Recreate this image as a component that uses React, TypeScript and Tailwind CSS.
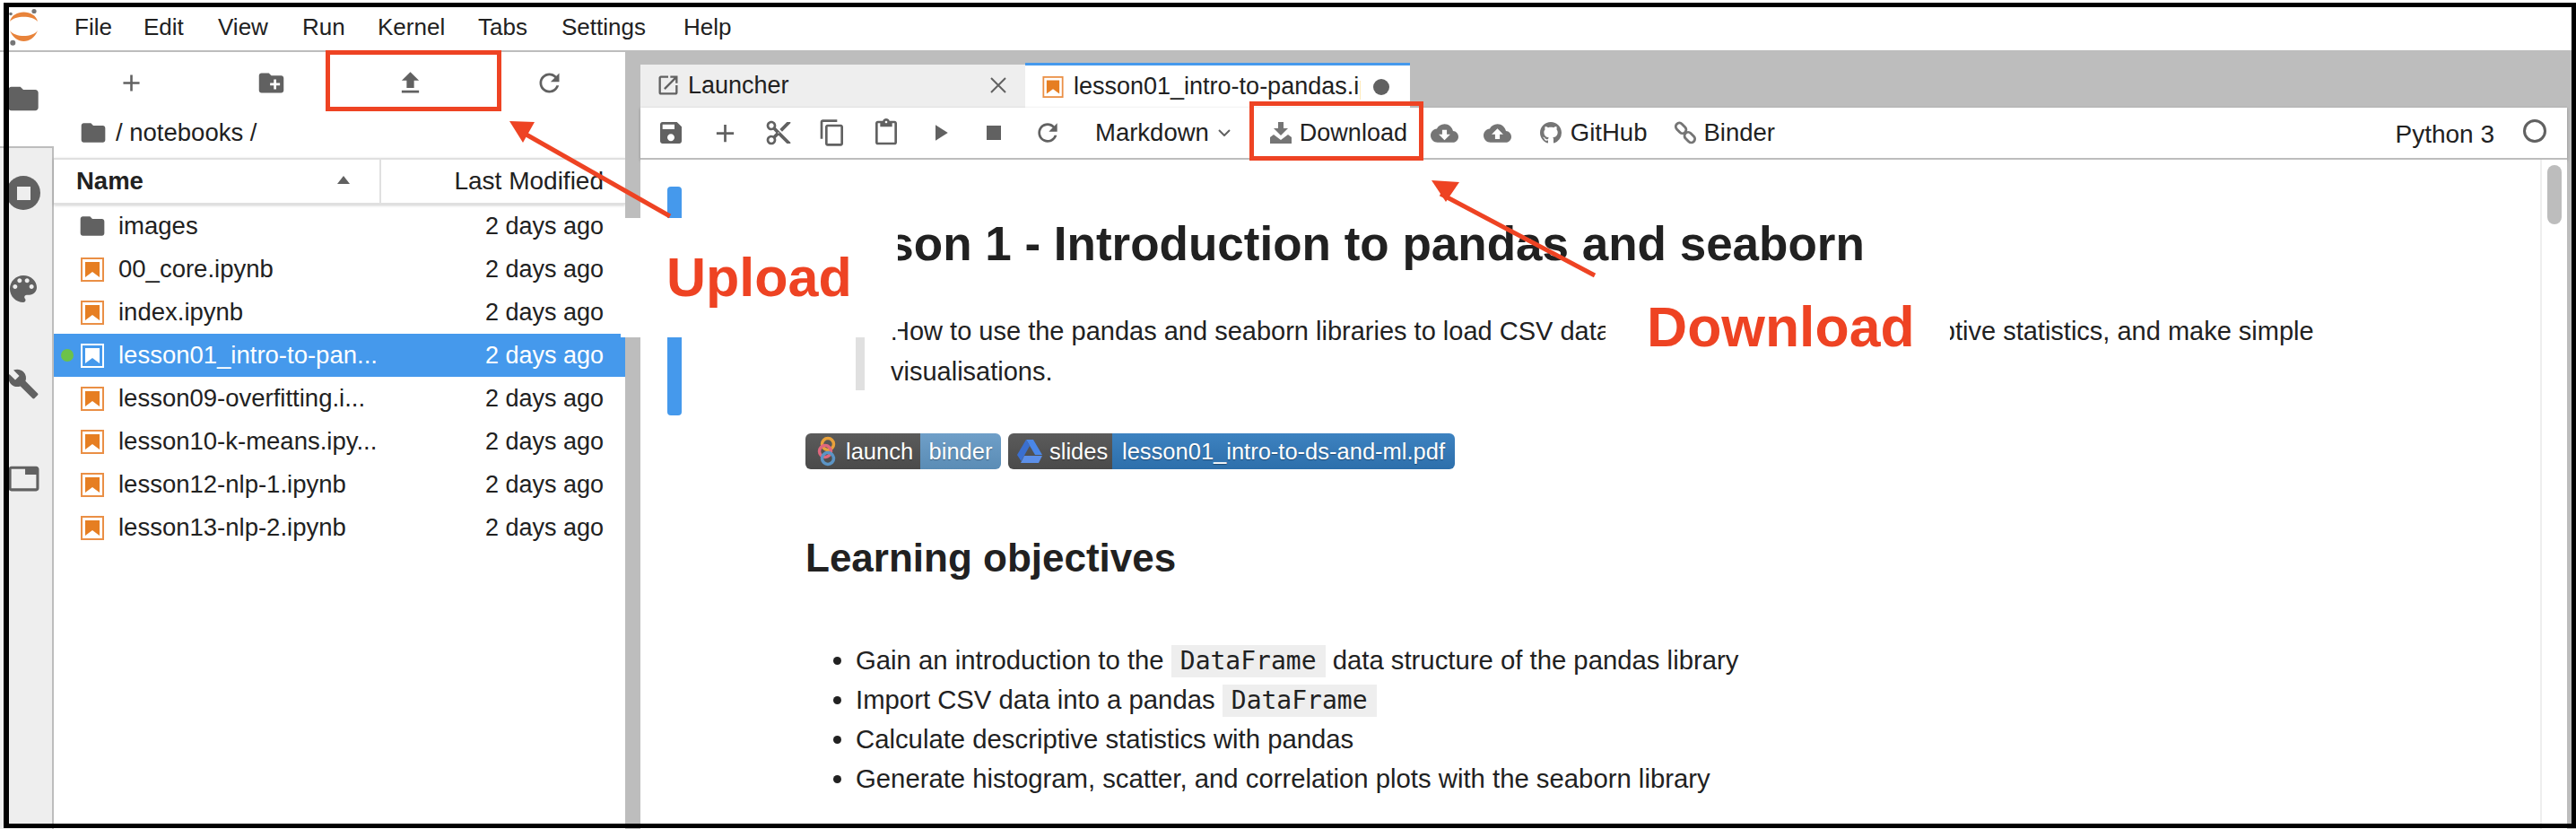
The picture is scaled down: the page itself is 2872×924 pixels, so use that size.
import type { ReactNode } from "react"

const fileRows = [
  { name: "images", kind: "folder" },
  { name: "00_core.ipynb", kind: "nb" },
  { name: "index.ipynb", kind: "nb" },
  { name: "lesson01_intro-to-pan...", kind: "nb", active: true },
  { name: "lesson09-overfitting.i...", kind: "nb" },
  { name: "lesson10-k-means.ipy...", kind: "nb" },
  { name: "lesson12-nlp-1.ipynb", kind: "nb" },
  { name: "lesson13-nlp-2.ipynb", kind: "nb" },
]

const P = {
  add: "M19 13h-6v6h-2v-6H5v-2h6V5h2v6h6v2z",
  newFolder:
    "M20 6h-8l-2-2H4c-1.11 0-1.99.89-1.99 2L2 18c0 1.11.89 2 2 2h16c1.11 0 2-.89 2-2V8c0-1.11-.89-2-2-2zm-1 8h-3v3h-2v-3h-3v-2h3V9h2v3h3v2z",
  upload: "M9 16h6v-6h4l-7-7-7 7h4zm-4 2h14v2H5z",
  refresh:
    "M17.65 6.35C16.2 4.9 14.21 4 12 4c-4.42 0-7.99 3.58-7.99 8s3.57 8 7.99 8c3.73 0 6.84-2.55 7.73-6h-2.08c-.82 2.33-3.04 4-5.65 4-3.31 0-6-2.69-6-6s2.69-6 6-6c1.66 0 3.14.69 4.22 1.78L13 11h7V4l-2.35 2.35z",
  folder: "M10 4H4c-1.1 0-1.99.9-1.99 2L2 18c0 1.1.9 2 2 2h16c1.1 0 2-.9 2-2V8c0-1.1-.9-2-2-2h-8l-2-2z",
  save: "M17 3H5c-1.11 0-2 .9-2 2v14c0 1.1.89 2 2 2h14c1.1 0 2-.9 2-2V7l-4-4zm-5 16c-1.66 0-3-1.34-3-3s1.34-3 3-3 3 1.34 3 3-1.34 3-3 3zm3-10H5V5h10v4z",
  cut: "M9.64 7.64c.23-.5.36-1.05.36-1.64 0-2.21-1.79-4-4-4S2 3.79 2 6s1.79 4 4 4c.59 0 1.14-.13 1.64-.36L10 12l-2.36 2.36C7.14 14.13 6.59 14 6 14c-2.21 0-4 1.79-4 4s1.79 4 4 4 4-1.79 4-4c0-.59-.13-1.14-.36-1.64L12 14l7 7h3v-1L9.64 7.64zM6 8c-1.1 0-2-.89-2-2s.9-2 2-2 2 .89 2 2-.9 2-2 2zm0 12c-1.1 0-2-.89-2-2s.9-2 2-2 2 .89 2 2-.9 2-2 2zm6-7.5c-.28 0-.5-.22-.5-.5s.22-.5.5-.5.5.22.5.5-.22.5-.5.5zM19 3l-6 6 2 2 7-7V3z",
  copy: "M16 1H4c-1.1 0-2 .9-2 2v14h2V3h12V1zm3 4H8c-1.1 0-2 .9-2 2v14c0 1.1.9 2 2 2h11c1.1 0 2-.9 2-2V7c0-1.1-.9-2-2-2zm0 16H8V7h11v14z",
  paste:
    "M19 2h-4.18C14.4.84 13.3 0 12 0c-1.3 0-2.4.84-2.82 2H5c-1.1 0-2 .9-2 2v16c0 1.1.9 2 2 2h14c1.1 0 2-.9 2-2V4c0-1.1-.9-2-2-2zm-7 0c.55 0 1 .45 1 1s-.45 1-1 1-1-.45-1-1 .45-1 1-1zm7 18H5V4h2v3h10V4h2v16z",
  run: "M8 5v14l11-7z",
  stop: "M6 6h12v12H6z",
  cloudDown:
    "M19.35 10.04C18.67 6.59 15.64 4 12 4 9.11 4 6.6 5.64 5.35 8.04 2.34 8.36 0 10.91 0 14c0 3.31 2.69 6 6 6h13c2.76 0 5-2.24 5-5 0-2.64-2.05-4.78-4.65-4.96zM17 13l-5 5-5-5h3V9h4v4h3z",
  cloudUp:
    "M19.35 10.04C18.67 6.59 15.64 4 12 4 9.11 4 6.6 5.64 5.35 8.04 2.34 8.36 0 10.91 0 14c0 3.31 2.69 6 6 6h13c2.76 0 5-2.24 5-5 0-2.64-2.05-4.78-4.65-4.96zM14 13v4h-4v-4H7l5-5 5 5h-3z",
  palette:
    "M12 3c-4.97 0-9 4.03-9 9s4.03 9 9 9c.83 0 1.5-.67 1.5-1.5 0-.39-.15-.74-.39-1.01-.23-.26-.38-.61-.38-.99 0-.83.67-1.5 1.5-1.5H16c2.76 0 5-2.24 5-5 0-4.42-4.03-8-9-8zm-5.5 9c-.83 0-1.5-.67-1.5-1.5S5.67 9 6.5 9 8 9.67 8 10.5 7.33 12 6.5 12zm3-4C8.67 8 8 7.33 8 6.5S8.67 5 9.5 5s1.5.67 1.5 1.5S10.33 8 9.5 8zm5 0c-.83 0-1.5-.67-1.5-1.5S13.67 5 14.5 5s1.5.67 1.5 1.5S15.33 8 14.5 8zm3 4c-.83 0-1.5-.67-1.5-1.5S16.67 9 17.5 9s1.5.67 1.5 1.5-.67 1.5-1.5 1.5z",
  wrench:
    "M22.7 19l-9.1-9.1c.9-2.3.4-5-1.5-6.9-2-2-5-2.4-7.4-1.3L9 6 6 9 1.6 4.7C.4 7.1.9 10.1 2.9 12.1c1.9 1.9 4.6 2.4 6.9 1.5l9.1 9.1c.4.4 1 .4 1.4 0l2.3-2.3c.5-.4.5-1.1.1-1.4z",
  tab: "M21 3H3c-1.1 0-2 .9-2 2v14c0 1.1.9 2 2 2h18c1.1 0 2-.9 2-2V5c0-1.1-.9-2-2-2zm0 16H3V5h10v4h8v10z",
  launch:
    "M19 19H5V5h7V3H5c-1.11 0-2 .9-2 2v14c0 1.1.89 2 2 2h14c1.1 0 2-.9 2-2v-7h-2v7zM14 3v2h3.59l-9.83 9.83 1.41 1.41L19 6.41V10h2V3h-7z",
}

const Icon = ({ d, className }: { d: string; className: string }) => (
  <svg viewBox="0 0 24 24" className={`shrink-0 ${className.includes("fill-") ? "" : "fill-[#616161]"} ${className}`}>
    <path d={d} />
  </svg>
)

const NotebookIcon = ({ white, className }: { white?: boolean; className: string }) => (
  <svg viewBox="0 0 26 27" className={`shrink-0 ${className}`}>
    <rect x="1" y="1" width="24" height="25" fill="none" stroke={white ? "#ffffff" : "#ea8f45"} strokeWidth="2" />
    <path d="M5 5h16v17l-8-6-8 6z" fill={white ? "#ffffff" : "#e67e22"} />
  </svg>
)

const ToolButton = ({ children, w }: { children: ReactNode; w: string }) => (
  <div className={`flex items-center justify-center ${w}`}>{children}</div>
)

const Row = ({ name, kind, active }: { name: string; kind: string; active?: boolean }) => (
  <div className={`relative flex h-[48px] items-center pl-[30px] pr-[24px] ${active ? "bg-[#4599ec] text-white" : "text-[#212121]"}`}>
    {active && <span className="absolute left-[8px] top-[17px] h-[14px] w-[14px] rounded-full bg-[#6cc24a]" />}
    {kind === "folder" ? <Icon d={P.folder} className="h-[32px] w-[32px] -ml-[3px] -mr-[3px]" /> : <NotebookIcon white={active} className="h-[27px] w-[26px]" />}
    <span className="ml-[16px] flex-1">{name}</span>
    <span className="text-[27px]">2 days ago</span>
  </div>
)

const Code = ({ children }: { children: string }) => (
  <code className="inline-block h-[36px] bg-[#eeeeee] px-[10px] font-['DejaVu_Sans_Mono',monospace] text-[28px] leading-[36px] text-[#212121]">
    {children}
  </code>
)

export default function App() {
  return (
    <div className="relative flex h-[924px] w-[2872px] flex-col overflow-hidden bg-white font-['Liberation_Sans',sans-serif] text-[27.5px] text-[#212121]">
      {/* menu bar */}
      <div className="flex h-[58px] shrink-0 items-center border-b-2 border-[#bdbdbd] pt-[4px] text-[26px]">
        <svg viewBox="0 0 50 57" className="h-[57px] w-[50px] shrink-0 -mt-[4px]">
          <path d="M11 24C14 10 39 10 42 24 36 17 17 17 11 24Z" fill="#e8833a" />
          <path d="M11 34C17 50 36 50 42 34 36 42 17 42 11 34Z" fill="#e8833a" />
          <circle cx="38" cy="12.5" r="2.6" fill="#767677" />
          <circle cx="12" cy="15.5" r="1.8" fill="#767677" />
          <circle cx="14.3" cy="47.7" r="3" fill="#767677" />
        </svg>
        <div className="ml-[33px] flex">
          <span className="w-[77px]">File</span>
          <span className="w-[83px]">Edit</span>
          <span className="w-[94px]">View</span>
          <span className="w-[84px]">Run</span>
          <span className="w-[112px]">Kernel</span>
          <span className="w-[93px]">Tabs</span>
          <span className="w-[136px]">Settings</span>
          <span>Help</span>
        </div>
      </div>

      <div className="flex min-h-0 flex-1">
        {/* activity bar */}
        <div className="flex w-[60px] shrink-0 flex-col">
          <div className="flex h-[105px] shrink-0 items-start justify-center bg-white pr-[8px] pt-[32px]">
            <Icon d={P.folder} className="h-[40px] w-[40px]" />
          </div>
          <div className="flex flex-1 flex-col items-center border-r-2 border-t-2 border-[#bdbdbd] bg-[#eeeeee] pr-[6px]">
            <div className="mt-[31px] flex h-[38px] w-[38px] items-center justify-center rounded-full bg-[#616161]">
              <span className="h-[15px] w-[15px] bg-[#eeeeee]" />
            </div>
            <Icon d={P.palette} className="mt-[68px] h-[40px] w-[40px]" />
            <Icon d={P.wrench} className="mt-[68px] h-[36px] w-[36px]" />
            <Icon d={P.tab} className="mt-[69px] h-[37px] w-[37px]" />
          </div>
        </div>

        {/* file browser */}
        <div className="flex w-[637px] shrink-0 flex-col">
          <div className="flex h-[62px] items-center pt-[6px]">
            <ToolButton w="w-[172px]"><Icon d={P.add} className="h-[31px] w-[31px]" /></ToolButton>
            <ToolButton w="w-[140px]"><Icon d={P.newFolder} className="h-[33px] w-[33px]" /></ToolButton>
            <ToolButton w="w-[170px]"><Icon d={P.upload} className="h-[33px] w-[33px]" /></ToolButton>
            <ToolButton w="w-[140px]"><Icon d={P.refresh} className="h-[33px] w-[33px]" /></ToolButton>
          </div>
          <div className="flex h-[56px] items-center pl-[28px]">
            <Icon d={P.folder} className="h-[32px] w-[32px]" />
            <span className="ml-[9px]">/ notebooks /</span>
          </div>
          <div className="flex h-[52px] items-center border-y-2 border-[#e0e0e0] shadow-[0_1px_3px_rgba(0,0,0,0.2)]">
            <div className="relative flex h-full w-[365px] items-center border-r-2 border-[#e0e0e0] pl-[25px] font-bold">
              Name
              <span className="absolute left-[316px] top-[18px] h-0 w-0 border-x-[7px] border-b-[9px] border-x-transparent border-b-[#616161]" />
            </div>
            <div className="flex-1 pr-[24px] text-right text-[28px]">Last Modified</div>
          </div>
          <div>
            {fileRows.map((r) => (
              <Row key={r.name} {...r} />
            ))}
          </div>
        </div>

        {/* splitter */}
        <div className="w-[17px] shrink-0 bg-[#bdbdbd]" />

        {/* main area */}
        <div className="flex min-w-0 flex-1 flex-col bg-[#bdbdbd] pr-[10px]">
          <div className="flex h-[62px] shrink-0 items-end pt-[12px] text-[27px]">
            <div className="flex h-[48px] w-[429px] items-center bg-[#eeeeee] pb-[2px] pl-[17px] pr-[20px]">
              <Icon d={P.launch} className="h-[28px] w-[28px]" />
              <span className="ml-[8px] flex-1 text-[#212121]">Launcher</span>
              <svg viewBox="0 0 20 20" className="h-[20px] w-[20px] stroke-[#616161] stroke-2">
                <path d="M2 2l16 16M18 2L2 18" />
              </svg>
            </div>
            <div className="ml-0 flex h-[50px] w-[429px] items-center overflow-hidden border-t-[3px] border-[#4599ec] bg-white pl-[19px] pr-[22px]">
              <NotebookIcon className="h-[24px] w-[24px]" />
              <span className="ml-[11px] w-[320px] overflow-hidden whitespace-nowrap">lesson01_intro-to-pandas.ipynb</span>
              <span className="ml-[14px] h-[18px] w-[18px] shrink-0 rounded-full bg-[#616161]" />
            </div>
          </div>

          {/* notebook toolbar */}
          <div className="flex h-[58px] shrink-0 items-center border-b-2 border-[#bdbdbd] bg-white pl-[4px] shadow-[0_1px_3px_rgba(0,0,0,0.25)]">
            <ToolButton w="w-[60px]"><Icon d={P.save} className="h-[32px] w-[32px]" /></ToolButton>
            <ToolButton w="w-[60px]"><Icon d={P.add} className="h-[33px] w-[33px]" /></ToolButton>
            <ToolButton w="w-[60px]"><Icon d={P.cut} className="h-[32px] w-[32px]" /></ToolButton>
            <ToolButton w="w-[60px]"><Icon d={P.copy} className="h-[32px] w-[32px]" /></ToolButton>
            <ToolButton w="w-[60px]"><Icon d={P.paste} className="h-[32px] w-[32px]" /></ToolButton>
            <ToolButton w="w-[60px]"><Icon d={P.run} className="h-[30px] w-[30px]" /></ToolButton>
            <ToolButton w="w-[60px]"><Icon d={P.stop} className="h-[32px] w-[32px]" /></ToolButton>
            <ToolButton w="w-[60px]"><Icon d={P.refresh} className="h-[32px] w-[32px]" /></ToolButton>
            <span className="ml-[23px]">Markdown</span>
            <svg viewBox="0 0 14 8" className="ml-[10px] h-[8px] w-[14px] shrink-0 fill-none stroke-[#616161] stroke-2">
              <path d="M1 1l6 6 6-6" />
            </svg>
            <svg viewBox="0 0 26 26" className="ml-[43px] h-[26px] w-[26px] shrink-0 fill-[#757575]">
              <path d="M10 1h6v7h5l-8 8-8-8h5z" />
              <path d="M1 18l4-3 8 6 8-6 4 3v7H1zM18 21h2v2h-2zM21 21h2v2h-2z" />
            </svg>
            <span className="ml-[8px] w-[117px] text-[27px]">Download</span>
            <Icon d={P.cloudDown} className="ml-[29px] h-[31px] w-[31px] fill-[#757575]" />
            <Icon d={P.cloudUp} className="ml-[28px] h-[31px] w-[31px] fill-[#757575]" />
            <svg viewBox="0 0 16 16" className="ml-[32px] h-[24px] w-[24px] shrink-0 fill-[#757575]">
              <path d="M8 0C3.58 0 0 3.58 0 8c0 3.54 2.29 6.53 5.47 7.59.4.07.55-.17.55-.38 0-.19-.01-.82-.01-1.49-2.01.37-2.53-.49-2.69-.94-.09-.23-.48-.94-.82-1.13-.28-.15-.68-.52-.01-.53.63-.01 1.08.58 1.23.82.72 1.21 1.87.87 2.33.66.07-.52.28-.87.51-1.07-1.78-.2-3.64-.89-3.64-3.95 0-.87.31-1.59.82-2.15-.08-.2-.36-1.02.08-2.12 0 0 .67-.21 2.2.82.64-.18 1.32-.27 2-.27.68 0 1.36.09 2 .27 1.53-1.04 2.2-.82 2.2-.82.44 1.1.16 1.92.08 2.12.51.56.82 1.27.82 2.15 0 3.07-1.87 3.75-3.65 3.95.29.25.54.73.54 1.48 0 1.07-.01 1.93-.01 2.2 0 .21.15.46.55.38A8.013 8.013 0 0016 8c0-4.42-3.58-8-8-8z" />
            </svg>
            <span className="ml-[10px]">GitHub</span>
            <svg viewBox="0 0 24 24" className="ml-[30px] h-[26px] w-[26px] shrink-0 fill-none stroke-[#757575] stroke-[2.6]">
              <rect x="1.5" y="3.5" width="12" height="7.5" rx="3.7" transform="rotate(45 7.5 7.2)" />
              <rect x="10.5" y="13" width="12" height="7.5" rx="3.7" transform="rotate(45 16.5 16.7)" />
            </svg>
            <span className="ml-[7px]">Binder</span>
            <span className="ml-auto mt-[4px] text-[28px]">Python 3</span>
            <span className="ml-[32px] mr-[23px] -mt-[4px] h-[26px] w-[26px] shrink-0 rounded-full border-[3px] border-[#616161]" />
          </div>

          {/* notebook content */}
          <div className="relative flex min-h-0 flex-1 bg-white">
            <div className="relative flex-1 pl-[184px] text-[29.3px]">
              <div className="absolute left-[30px] top-[30px] h-[255px] w-[16px] rounded-[4px] bg-[#4599ec]" />
              <h1 className="mt-[60px] text-[53px] font-bold leading-[68px] text-[#212121]">
                Lesson 1 - Introduction to pandas and seaborn
              </h1>
              <div className="relative mt-[41px] pl-[95px] text-[29px] leading-[45px]">
                <span className="absolute left-[56px] top-[28px] h-[60px] w-[10px] bg-[#e0e0e0]" />
                {/* the gap sits under the Download label, where the reference's line runs longer */}
                <p className="w-[1650px]">
                  How to use the pandas and seaborn libraries to load CSV data, calculate<span className="inline-block w-[152px]" /> descriptive statistics, and make simple visualisations.
                </p>
              </div>
              <div className="mt-[46px] flex gap-[8px] text-[25.5px] text-white [text-shadow:0_1px_1px_rgba(0,0,0,0.35)]">
                <div className="flex h-[40px] overflow-hidden rounded-[6px]">
                  <div className="flex w-[128px] items-center bg-gradient-to-b from-[#5b5b5b] to-[#4a4a4a] pl-[13px]">
                    <svg viewBox="0 0 22 34" className="h-[34px] w-[22px] shrink-0 fill-none stroke-[3.5]">
                      <circle cx="12" cy="9" r="6.5" stroke="#e8a13b" />
                      <circle cx="9" cy="17" r="6.5" stroke="#e0677d" />
                      <circle cx="12" cy="25" r="6.5" stroke="#5b94c5" />
                    </svg>
                    <span className="ml-[10px]">launch</span>
                  </div>
                  <div className="flex w-[90px] items-center justify-center bg-gradient-to-b from-[#6f9fc8] to-[#5a8cb5]">binder</div>
                </div>
                <div className="flex h-[40px] overflow-hidden rounded-[6px]">
                  <div className="flex w-[116px] items-center bg-gradient-to-b from-[#5b5b5b] to-[#4a4a4a] pl-[10px]">
                    <svg viewBox="0 0 28 26" className="h-[30px] w-[28px] shrink-0">
                      <path d="M10 0h8l10 17h-8z" fill="#4a87e8" />
                      <path d="M10 0l4 7-9.5 17L0 17z" fill="#3a6fd0" />
                      <path d="M8 18h20l-4 8H4z" fill="#5c8fe8" />
                    </svg>
                    <span className="ml-[8px]">slides</span>
                  </div>
                  <div className="flex w-[382px] items-center justify-center bg-gradient-to-b from-[#3d82c0] to-[#2d6fab]">lesson01_intro-to-ds-and-ml.pdf</div>
                </div>
              </div>
              <h2 className="mt-[71px] text-[44px] font-bold leading-[56px] text-[#212121]">Learning objectives</h2>
              <ul className="mt-[64px] list-disc pl-[56px] leading-[44px] marker:text-[#212121]">
                <li className="h-[44px]">
                  Gain an introduction to the <Code>DataFrame</Code> data structure of the pandas library
                </li>
                <li className="h-[44px]">
                  Import CSV data into a pandas <Code>DataFrame</Code>
                </li>
                <li className="h-[44px]">Calculate descriptive statistics with pandas</li>
                <li className="h-[44px]">Generate histogram, scatter, and correlation plots with the seaborn library</li>
              </ul>
            </div>
            {/* scrollbar */}
            <div className="w-[30px] shrink-0 border-l-2 border-[#eeeeee] pl-[6px] pt-[6px]">
              <div className="h-[66px] w-[16px] rounded-full bg-[#bdbdbd]" />
            </div>
          </div>
        </div>
      </div>

      {/* annotations laid over the screenshot */}
      <div className="absolute left-[692px] top-[243px] flex h-[133px] w-[309px] items-center bg-white pl-[51px] text-[61px] font-bold text-[#ee4323]">Upload</div>
      <div className="absolute left-[1790px] top-[330px] flex h-[70px] w-[384px] items-center bg-white pl-[46px] text-[62.5px] font-bold text-[#ee4323]">Download</div>
      <div className="absolute left-[363px] top-[56px] h-[68px] w-[196px] border-[5px] border-[#ee4323]" />
      <div className="absolute left-[1393px] top-[113px] h-[66px] w-[194px] border-[5px] border-[#ee4323]" />
      <svg viewBox="0 0 2872 924" className="pointer-events-none absolute inset-0 h-[924px] w-[2872px]">
        <path d="M578 145L747 241" stroke="#ee4323" strokeWidth="5" />
        <path d="M568 135L596 136 583 159z" fill="#ee4323" />
        <path d="M1606 216L1778 307" stroke="#ee4323" strokeWidth="5" />
        <path d="M1596 201L1627 203 1612 225z" fill="#ee4323" />
      </svg>
      <div className="pointer-events-none absolute bottom-[1px] left-[4px] right-0 top-[3px] border-b-[5px] border-l-[6px] border-r-[5px] border-t-[5px] border-black" />
    </div>
  )
}
